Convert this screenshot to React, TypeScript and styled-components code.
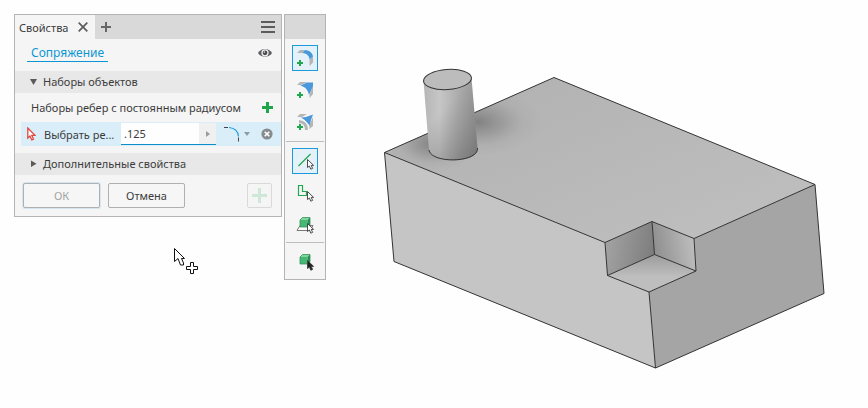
import React from "react";
import styled, { createGlobalStyle } from "styled-components";

const Global = createGlobalStyle`
  * { box-sizing: border-box; }
  body { margin: 0; background: #fdfefd; }
  body, button, input { font-family: "Noto Sans", "Open Sans", sans-serif; font-size: 11px; color: #3c3c3c; }
  svg { display: block; flex: none; }
`;

const Workspace = styled.main`
  position: relative;
  display: flex;
  align-items: flex-start;
  gap: 2px;
  padding: 14px;
  min-height: 100vh;
`;

const Panel = styled.section`
  flex: none;
  width: 268px;
  border: 1px solid #b4b4b4;
  background: #f5f5f5;
`;

const IconButton = styled.button`
  display: flex;
  align-items: center;
  justify-content: center;
  border: 0;
  padding: 0;
  background: none;
`;

const TabBar = styled.header`
  display: flex;
  align-items: center;
  height: 24px;
  padding-right: 6px;
  background: #d9d9d9;
`;

const Tab = styled.div`
  display: flex;
  align-items: center;
  gap: 10px;
  height: 24px;
  padding: 0 7px 0 4px;
  margin-right: 6px;
  background: #f5f5f5;
`;

const Spacer = styled.div`
  flex: 1;
`;

const FeatureRow = styled.div`
  display: flex;
  justify-content: space-between;
  align-items: flex-start;
  height: 32px;
  padding: 4px 8px 0 12px;
`;

const FeatureLink = styled.a`
  height: 19px;
  padding: 0 4px;
  border-bottom: 1px solid #0c96d4;
  color: #0c96d4;
  font-size: 12px;
  line-height: 20px;
  text-decoration: none;
`;

const SectionHeader = styled.button`
  display: flex;
  align-items: center;
  gap: 6px;
  width: 100%;
  height: 22px;
  padding: 0 15px;
  border: 0;
  background: #e8e8e8;
  line-height: 22px;
`;

const SetTitle = styled.div`
  display: flex;
  align-items: center;
  justify-content: space-between;
  height: 29px;
  padding: 0 8px 0 16px;
`;

const SetRow = styled.div`
  display: flex;
  align-items: center;
  height: 24px;
  margin: 0 0 7px 6px;
  padding: 0 8px 0 6px;
  background: #d9eef8;
`;

const SetLabel = styled.label`
  width: 77px;
  margin-left: 8px;
  overflow: hidden;
  white-space: nowrap;
`;

const ValueField = styled.div`
  display: flex;
  width: 95px;
  height: 22px;
  border-bottom: 1px solid #0c8fc8;
`;

const ValueInput = styled.input`
  flex: 1;
  min-width: 0;
  padding: 0 3px;
  border: 0;
  outline: 0;
  background: #fefefe;
`;

const ValueMenu = styled(IconButton)`
  width: 17px;
  background: #f0f0f0;
`;

const ShapeMenu = styled(IconButton)`
  gap: 4px;
  margin-left: 8px;
`;

const Footer = styled.footer`
  display: flex;
  align-items: center;
  gap: 8px;
  height: 41px;
  padding: 0 9px 0 8px;
`;

const PushButton = styled.button<{ $focus?: boolean }>`
  width: 77px;
  height: 25px;
  padding: 0;
  border: 1px solid #b0b0b0;
  border-radius: 2px;
  background: #f6f6f6;
  box-shadow: ${(p) => (p.$focus ? "0 0 0 1px #d5e6f0" : "none")};
  &:disabled { color: #a3a3a3; }
`;

const AddButton = styled(IconButton)`
  width: 25px;
  height: 25px;
  border: 1px solid #d9d9d9;
  border-radius: 2px;
`;

const Toolbar = styled.nav`
  flex: none;
  width: 42px;
  border: 1px solid #b4b4b4;
  background: #f5f5f5;
`;

const ToolbarCap = styled.div`
  height: 24px;
  background: #d9d9d9;
`;

const ToolGroup = styled.div`
  display: flex;
  flex-direction: column;
  align-items: center;
  gap: 6px;
  margin: 0 1px;
  padding: 6px 0;
  & + & {
    padding: 6px 0 4px;
    border-top: 1px solid #bdbdbd;
  }
`;

const ToolButton = styled(IconButton)<{ $active?: boolean }>`
  width: 26px;
  height: 26px;
  border: 1px solid ${(p) => (p.$active ? "#1c9bdc" : "transparent")};
  background: ${(p) => (p.$active ? "#e4f1f8" : "none")};
`;

const Viewport = styled.figure`
  flex: 1;
  margin: 46px 28px 0 42px;
  svg { width: 100%; height: auto; }
`;

const Pointer = styled.div`
  position: absolute;
  left: 173px;
  top: 247px;
  pointer-events: none;
`;

const Plus = ({ size, color, arm }: { size: number; color: string; arm: number }) => (
  <svg width={size} height={size} viewBox={`0 0 ${size} ${size}`}>
    <path d={`M${size / 2} 0V${size}M0 ${size / 2}H${size}`} stroke={color} strokeWidth={arm} />
  </svg>
);

const Disclosure = ({ open }: { open?: boolean }) => (
  <svg width="7" height="8" viewBox="0 0 7 8">
    <path d={open ? "M0 1H7L3.5 7Z" : "M1 0.5V7L6.5 3.75Z"} fill="#5a5a5a" />
  </svg>
);

const SmallArrow = ({ fill = "#fff" }: { fill?: string }) => (
  <path
    d="M12.5 8.5V16.5L14.4 15L15.8 18.2L17.6 17.4L16.2 14.4H18.6Z"
    fill={fill}
    stroke="#3a3a3a"
    strokeWidth=".9"
    strokeLinejoin="round"
  />
);

const MiniPlus = () => <path d="M5 12V18M2 15H8" stroke="#20a850" strokeWidth="2" />;

const ToolIcon = ({ children }: { children: React.ReactNode }) => (
  <svg width="20" height="20" viewBox="0 0 20 20">{children}</svg>
);

const Block = () => (
  <>
    <path d="M5 5L7.5 2.5H15L12.5 5Z" fill="#7ed69e" />
    <path d="M5 5H12.5V12H5Z" fill="#45b873" />
    <path d="M12.5 5L15 2.5V9.5L12.5 12Z" fill="#258a50" />
    <path d="M5 5L7.5 2.5H15V9.5L12.5 12H5Z" fill="none" stroke="#37925a" strokeWidth=".8" strokeLinejoin="round" />
  </>
);

const Model = () => (
  <svg viewBox="0 0 456 314" role="img" aria-label="3D model">
    <defs>
      <linearGradient id="top" x1="0" y1="0" x2="1" y2="1">
        <stop offset="0" stopColor="#b0b0b0" /><stop offset="1" stopColor="#c0c0c0" />
      </linearGradient>
      <linearGradient id="cyl" x1="0" y1="0" x2="1" y2="0">
        <stop offset="0" stopColor="#b6b6b6" /><stop offset=".3" stopColor="#c6c6c6" />
        <stop offset=".65" stopColor="#acacac" /><stop offset="1" stopColor="#989898" />
      </linearGradient>
      <linearGradient id="foot" x1=".4" y1=".4" x2=".8" y2="1">
        <stop offset="0" stopColor="#777" stopOpacity="0" /><stop offset="1" stopColor="#666" stopOpacity=".6" />
      </linearGradient>
      <linearGradient id="wallL" x1="0" y1=".3" x2="1" y2=".5">
        <stop offset="0" stopColor="#a4a4a4" /><stop offset="1" stopColor="#7d7d7d" />
      </linearGradient>
      <linearGradient id="wallR" x1="0" y1=".6" x2="1" y2=".4">
        <stop offset="0" stopColor="#8c8c8c" /><stop offset="1" stopColor="#c0c0c0" />
      </linearGradient>
      <linearGradient id="floor" x1=".5" y1="0" x2=".5" y2="1">
        <stop offset="0" stopColor="#9c9c9c" /><stop offset=".6" stopColor="#bebebe" />
      </linearGradient>
      <radialGradient id="shade">
        <stop offset="0" stopColor="#6c6c6c" stopOpacity=".7" /><stop offset=".4" stopColor="#777" stopOpacity=".38" />
        <stop offset=".7" stopColor="#888" stopOpacity=".12" /><stop offset="1" stopColor="#888" stopOpacity="0" />
      </radialGradient>
      <clipPath id="topClip"><path d="M14.5 92.5L184 17.5L445 124.5L324 178.5L282 161.5L235 182.5Z" /></clipPath>
    </defs>
    <path d="M14.5 92.5L184 17.5L445 124.5L324 178.5L282 161.5L235 182.5Z" fill="url(#top)" />
    <g clipPath="url(#topClip)">
      <ellipse cx="108" cy="62" rx="64" ry="34" fill="url(#shade)" />
      <ellipse cx="62" cy="84" rx="46" ry="28" fill="url(#shade)" />
    </g>
    <path d="M14.5 92.5L235 182.5L237.5 215.5L279 232L285.5 308L24 201.5Z" fill="#c5c5c5" />
    <path d="M445 124.5L324 178.5L326 211L279 232L285.5 308L454 233.5Z" fill="#a5a5a5" />
    <path d="M235 182.5L282 161.5L284.5 194.5L237.5 215.5Z" fill="url(#wallL)" />
    <path d="M282 161.5L324 178.5L326 211L284.5 194.5Z" fill="url(#wallR)" />
    <path d="M284.5 194.5L326 211L279 232L237.5 215.5Z" fill="url(#floor)" />
    <path
      d="M235 182.5L14.5 92.5L184 17.5L445 124.5L324 178.5L282 161.5L235 182.5L237.5 215.5L279 232L326 211L324 178.5M14.5 92.5L24 201.5L285.5 308L454 233.5L445 124.5M279 232L285.5 308M282 161.5L284.5 194.5L326 211M237.5 215.5L284.5 194.5"
      fill="none" stroke="#333" strokeLinejoin="round"
    />
    <path d="M53.5 21C54 10 100 6 101.5 18L107.5 88C109 104 60 104 59 90Z" fill="url(#cyl)" />
    <path d="M53.5 21C54 10 100 6 101.5 18L107.5 88C109 104 60 104 59 90Z" fill="url(#foot)" />
    <path d="M59 90C61 104 109 103 107.5 88" fill="none" stroke="#333" />
    <ellipse cx="77.5" cy="19.5" rx="24" ry="10" transform="rotate(-4 77.5 19.5)" fill="#bcbcbc" stroke="#333" />
  </svg>
);

export default function App() {
  return (
    <>
      <Global />
      <Workspace>
        <Panel>
          <TabBar>
            <Tab>
              <span>Свойства</span>
              <IconButton aria-label="Закрыть">
                <svg width="10" height="10" viewBox="0 0 10 10"><path d="M.7 .7L9.3 9.3M9.3 .7L.7 9.3" stroke="#5c5c5c" strokeWidth="1.7" /></svg>
              </IconButton>
            </Tab>
            <IconButton aria-label="Новая вкладка"><Plus size={10} color="#666" arm={2} /></IconButton>
            <Spacer />
            <IconButton aria-label="Меню">
              <svg width="14" height="12" viewBox="0 0 14 12"><path d="M0 1H14M0 6H14M0 11H14" stroke="#5c5c5c" strokeWidth="2" /></svg>
            </IconButton>
          </TabBar>
          <FeatureRow>
            <FeatureLink href="#">Сопряжение</FeatureLink>
            <IconButton aria-label="Видимость">
              <svg width="16" height="20" viewBox="0 0 16 20">
                <path d="M1 10C4 4.5 12 4.5 15 10C12 15 4 15 1 10Z" fill="#5f5f63" />
                <circle cx="8" cy="9.8" r="3.6" fill="#f5f5f5" /><circle cx="8" cy="9.8" r="2.4" fill="#4b4b50" />
                <circle cx="7.3" cy="9" r=".8" fill="#f5f5f5" />
              </svg>
            </IconButton>
          </FeatureRow>
          <SectionHeader><Disclosure open />Наборы объектов</SectionHeader>
          <SetTitle>
            <span>Наборы ребер с постоянным радиусом</span>
            <IconButton aria-label="Добавить набор"><Plus size={11} color="#1fa64c" arm={3} /></IconButton>
          </SetTitle>
          <SetRow>
            <svg width="9" height="14" viewBox="0 0 9 14">
              <path d="M.8 1V11L3 9L4.8 13L6.5 12.2L4.8 8.4H8Z" fill="#fff" stroke="#e2483f" strokeWidth="1.3" />
            </svg>
            <SetLabel htmlFor="radius">Выбрать ре...</SetLabel>
            <ValueField>
              <ValueInput id="radius" defaultValue=".125" />
              <ValueMenu aria-label="Параметры значения">
                <svg width="4" height="6" viewBox="0 0 4 6"><path d="M0 0V6L4 3Z" fill="#9a9a9a" /></svg>
              </ValueMenu>
            </ValueField>
            <ShapeMenu aria-label="Тип сопряжения">
              <svg width="16" height="16" viewBox="0 0 16 16" fill="none">
                <path d="M0 1.5H4M14.5 11.5V15.5" stroke="#444" />
                <path d="M5 1.5C10.5 2 14 5 14.5 10.5" stroke="#1c9bdc" strokeWidth="1.2" />
              </svg>
              <svg width="6" height="4" viewBox="0 0 6 4"><path d="M0 0H6L3 4Z" fill="#8d9ba2" /></svg>
            </ShapeMenu>
            <Spacer />
            <IconButton aria-label="Удалить">
              <svg width="12" height="12" viewBox="0 0 12 12"><circle cx="6" cy="6" r="5.6" fill="#868b8e" /><path d="M3.7 3.7L8.3 8.3M8.3 3.7L3.7 8.3" stroke="#fff" strokeWidth="1.6" /></svg>
            </IconButton>
          </SetRow>
          <SectionHeader><Disclosure />Дополнительные свойства</SectionHeader>
          <Footer>
            <PushButton $focus disabled>ОК</PushButton>
            <PushButton>Отмена</PushButton>
            <Spacer />
            <AddButton aria-label="Применить"><Plus size={15} color="#cde8d6" arm={3} /></AddButton>
          </Footer>
        </Panel>

        <Toolbar aria-label="Инструменты">
          <ToolbarCap />
          <ToolGroup>
            <ToolButton $active aria-label="Сопряжение с постоянным радиусом">
              <ToolIcon>
                <path d="M2 5L5 2H10L7.5 5ZM14.5 11.5L18 8.5V14.5L14.5 18Z" fill="#b5b5b5" />
                <path d="M7.5 5L10 2C15 2.5 17.5 5 18 8.5L14.5 11.5C14.5 8 12 5.5 7.5 5Z" fill="#4a98dc" />
                <MiniPlus />
              </ToolIcon>
            </ToolButton>
            <ToolButton aria-label="Сопряжение с переменным радиусом">
              <ToolIcon>
                <path d="M2 5L5 2H12L6 5ZM14.5 15L18 5V14L14.5 18Z" fill="#b5b5b5" />
                <path d="M5.5 5.5L12 2.5H18V6L14 15C13 10 10.5 7 5.5 5.5Z" fill="#4a98dc" />
                <MiniPlus />
              </ToolIcon>
            </ToolButton>
            <ToolButton aria-label="Сопряжение углов">
              <ToolIcon>
                <path d="M2 5L5 2H12L7 5ZM14.5 13L18 5V14L14.5 17ZM4 8Q13 9 13 18H10Q10 11 4 11Z" fill="#b5b5b5" />
                <path d="M6 5.5L11 5L18 2.5L16 8L14.5 14Q12 9 6 5.5Z" fill="#4a98dc" />
                <MiniPlus />
              </ToolIcon>
            </ToolButton>
          </ToolGroup>
          <ToolGroup>
            <ToolButton $active aria-label="Выбор ребра">
              <ToolIcon><path d="M3.5 15L15.5 3" stroke="#20a850" strokeWidth="1.3" /><SmallArrow /></ToolIcon>
            </ToolButton>
            <ToolButton aria-label="Выбор контура">
              <ToolIcon><path d="M3.5 2.5H7.5V8.5H11.5V12.5H3.5Z" fill="none" stroke="#20a850" strokeWidth="1.2" /><SmallArrow /></ToolIcon>
            </ToolButton>
            <ToolButton aria-label="Выбор элемента">
              <ToolIcon><path d="M2 15.5L5 10.5H18L15 15.5Z" fill="#fff" stroke="#777" /><Block /><SmallArrow /></ToolIcon>
            </ToolButton>
          </ToolGroup>
          <ToolGroup>
            <ToolButton aria-label="Выбор тела">
              <ToolIcon><Block /><SmallArrow fill="#222" /></ToolIcon>
            </ToolButton>
          </ToolGroup>
        </Toolbar>

        <Viewport><Model /></Viewport>

        <Pointer>
          <svg width="26" height="28" viewBox="0 0 26 28">
            <path d="M1.5 1.5V14.5L5 11.5L7.5 18H10.5V16L8.5 11.5H11.5Z" fill="#fff" stroke="#111" />
            <path d="M17.5 15.5H20.5V19.5H24.5V22.5H20.5V26.5H17.5V22.5H13.5V19.5H17.5Z" fill="#fff" stroke="#111" />
          </svg>
        </Pointer>
      </Workspace>
    </>
  );
}
